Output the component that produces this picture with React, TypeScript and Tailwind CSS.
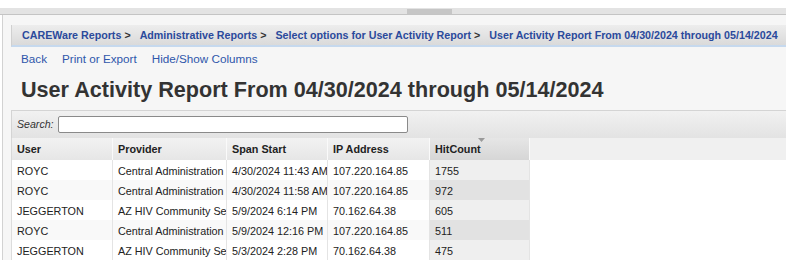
const crumbs = [
  "CAREWare Reports",
  "Administrative Reports",
  "Select options for User Activity Report",
];

const columns = [
  { label: "User", width: "w-[102px]" },
  { label: "Provider", width: "w-[114px]" },
  { label: "Span Start", width: "w-[101px]" },
  { label: "IP Address", width: "w-[102px]" },
  { label: "HitCount", width: "w-[100px]" },
];

const rows = [
  ["ROYC", "Central Administration", "4/30/2024 11:43 AM", "107.220.164.85", "1755"],
  ["ROYC", "Central Administration", "4/30/2024 11:58 AM", "107.220.164.85", "972"],
  ["JEGGERTON", "AZ HIV Community Services", "5/9/2024 6:14 PM", "70.162.64.38", "605"],
  ["ROYC", "Central Administration", "5/9/2024 12:16 PM", "107.220.164.85", "511"],
  ["JEGGERTON", "AZ HIV Community Services", "5/3/2024 2:28 PM", "70.162.64.38", "475"],
];

export default function App() {
  return (
    <div
      className="w-[786px] h-[260px] overflow-hidden bg-white text-[#222]"
      style={{ fontFamily: '"Liberation Sans", Arial, sans-serif' }}
    >
      {/* scrollbar strip */}
      <div className="h-[8px] bg-white" />
      <div className="h-[7px] bg-[#e3e3e3] border-b border-[#c4c4c4] flex">
        <div className="ml-[407px] w-[45px] h-[5px] mt-[1px] bg-[#c6c6c6]" />
      </div>

      <div className="ml-[2px] border-l border-[#d2d2d2] bg-[#f6f6f6] pl-[8px] pt-[10px] h-[245px]">
        {/* breadcrumb */}
        <div className="h-[22px] flex items-center pl-[10px] border-l border-[#d0d0d0] border-b-2 border-b-[#c6d9ee] bg-gradient-to-b from-[#ededed] to-[#dadada] text-[10.7px] font-bold whitespace-nowrap overflow-hidden">
          {crumbs.map((c) => (
            <span key={c} className="flex items-center">
              <span className="text-[#2b4a9c]">{c}</span>
              <span className="text-[#333] ml-[3px] mr-[9px]">&gt;</span>
            </span>
          ))}
          <span className="text-[#2b4a9c]">User Activity Report From 04/30/2024 through 05/14/2024</span>
        </div>

        {/* links */}
        <div className="h-[23px] flex items-center gap-[15px] pl-[10px] text-[11.7px] text-[#2f56ab]">
          <span>Back</span>
          <span>Print or Export</span>
          <span>Hide/Show Columns</span>
        </div>

        {/* title */}
        <div className="h-[40px] pb-[1px] flex items-center pl-[10px]">
          <h1 className="text-[21.6px] leading-none font-bold text-[#333] whitespace-nowrap">
            User Activity Report From 04/30/2024 through 05/14/2024
          </h1>
        </div>

        {/* search */}
        <div className="h-[28px] flex items-center border-t border-l border-[#d4d4d4] bg-gradient-to-b from-[#f1f1f1] to-[#e3e3e3] pl-[5px]">
          <span className="italic text-[10.6px] text-[#333] w-[41px]">Search:</span>
          <div className="w-[350px] h-[17px] border border-[#8a8a8a] rounded-[2px] bg-white" />
        </div>

        {/* table */}
        <div className="flex flex-col">
          <div className="flex h-[22px] bg-[#f0f0f0]">
            {columns.map((col, i) => (
              <div
                key={col.label}
                className={`${col.width} relative flex items-center pl-[5px] text-[10.8px] font-bold border-r border-[#fafafa] border-l-[#d8d8d8] ${
                  i === 0 ? "border-l" : ""
                } ${
                  i === 4
                    ? "bg-gradient-to-b from-[#e6e6e6] to-[#d6d6d6]"
                    : "bg-gradient-to-b from-[#f2f2f2] to-[#e6e6e6]"
                }`}
              >
                {i === 4 && (
                  <svg
                    className="absolute left-[48px] top-0"
                    width="7"
                    height="4"
                    viewBox="0 0 7 4"
                  >
                    <path d="M0 0 L7 0 L3.5 4 Z" fill="#9a9a9a" />
                  </svg>
                )}
                {col.label}
              </div>
            ))}
          </div>
          {rows.map((r, ri) => (
            <div key={ri} className="flex h-[20px] bg-white">
              {r.map((cell, ci) => (
                <div
                  key={ci}
                  className={`${columns[ci].width} flex items-center pl-[5px] pt-[2px] text-[10.8px] text-[#222] whitespace-nowrap overflow-hidden border-r border-[#e4e4e4] ${
                    ci === 0 ? "border-l border-l-[#dcdcdc]" : ""
                  } ${
                    ci === 4
                      ? ri % 2 === 1
                        ? "bg-[#e2e2e2]"
                        : "bg-[#efefef]"
                      : ri % 2 === 1
                        ? "bg-[#f9f9f9]"
                        : "bg-white"
                  }`}
                >
                  {cell}
                </div>
              ))}
              <div className="flex-1 bg-white" />
            </div>
          ))}
        </div>
      </div>
    </div>
  );
}
